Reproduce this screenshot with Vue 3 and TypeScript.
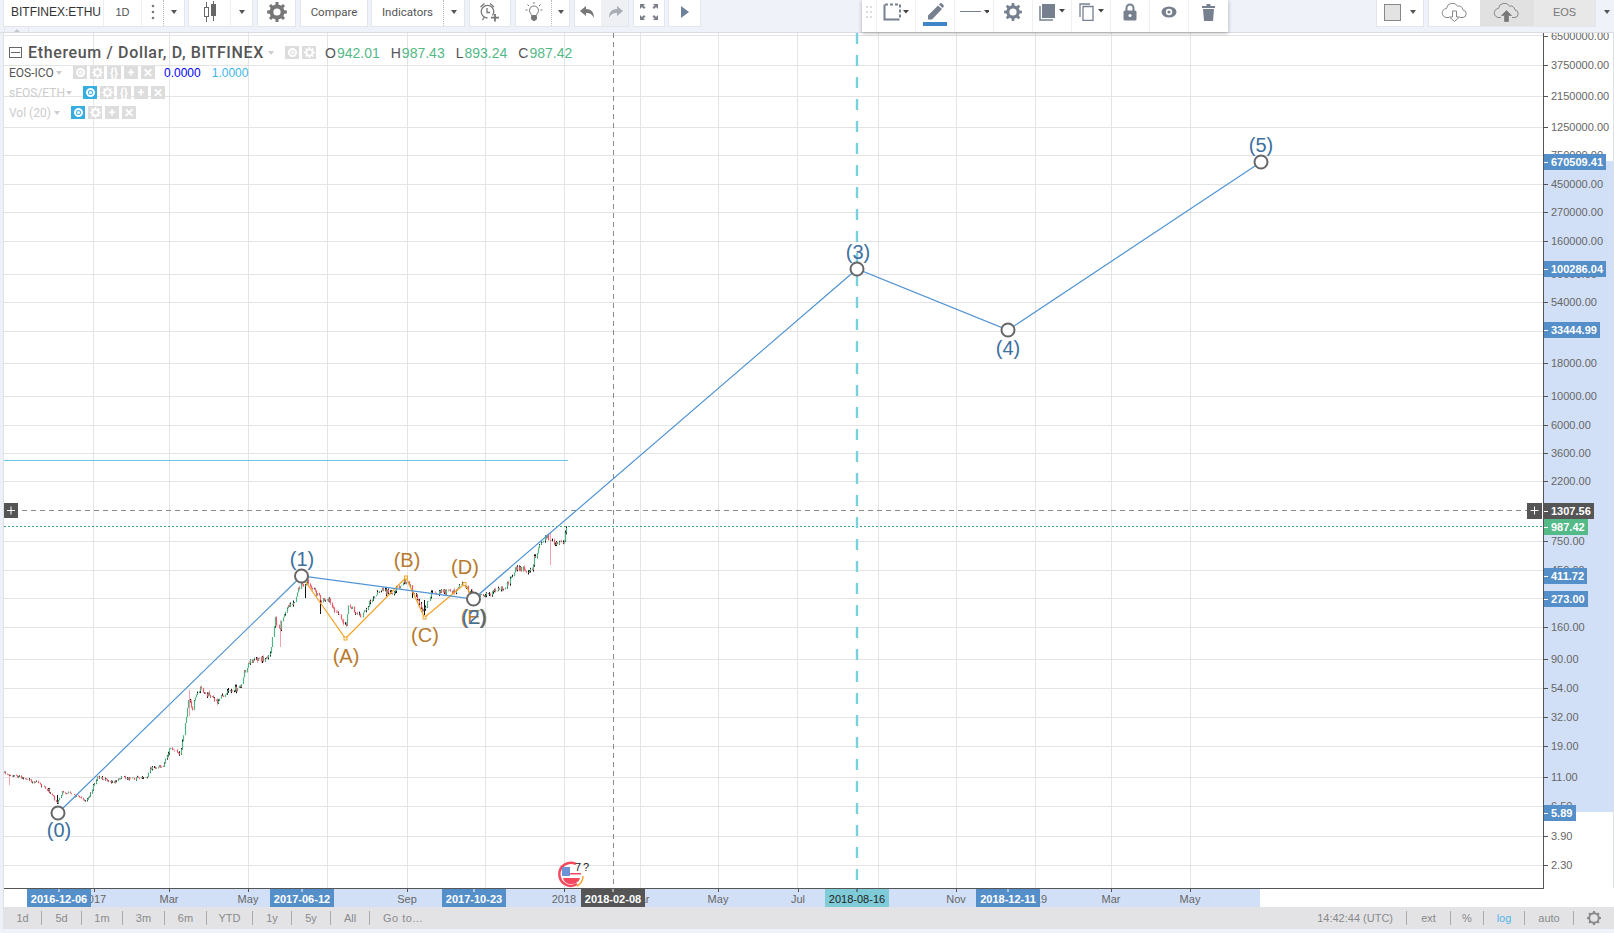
<template>
  <div class="app">
    <header class="topbar">
      <div class="tb-group">
        <div class="cell symbol">BITFINEX:ETHU</div>
        <div class="cell interval">1D</div>
        <div class="cell dots">
          <svg width="4" height="18" viewBox="0 0 4 18"><circle cx="2" cy="3" r="1.3" /><circle cx="2" cy="9" r="1.3" /><circle cx="2" cy="15" r="1.3" /></svg>
        </div>
        <div class="cell caret-cell dotted"><i class="caret"></i></div>
      </div>
      <div class="tb-group tight">
        <div class="cell candles">
          <svg width="20" height="22" viewBox="0 0 20 22" fill="none" stroke="#666">
            <path d="M6.500 1v20M13.500 0v20" />
            <rect x="4.500" y="6.500" width="4" height="9" fill="#fff" />
            <rect x="11.500" y="3.500" width="4" height="11" fill="#666" />
          </svg>
        </div>
        <div class="cell caret-cell"><i class="caret"></i></div>
      </div>
      <div class="tb-group">
        <div class="cell gear-cell">
          <svg width="20" height="20" viewBox="0 0 20 20"><path :d="gearBig" fill="#777" fill-rule="evenodd" /></svg>
        </div>
      </div>
      <div class="tb-group">
        <div class="cell compare">Compare</div>
      </div>
      <div class="tb-group tight">
        <div class="cell indicators">Indicators</div>
        <div class="cell caret-cell dotted"><i class="caret"></i></div>
      </div>
      <div class="tb-group">
        <div class="cell alarm">
          <svg width="22" height="20" viewBox="0 0 22 20" fill="none" stroke="#777" stroke-width="1.300">
            <path d="M13.500 13.500A6.300 6.300 0 1 0 8.500 16" />
            <path d="M8 6v4.500h3" />
            <path d="M1.500 5 5.500 1.500M11 1.500l4 3.500M3.500 18l1.500-2.500" />
            <path d="M16 12v7.500M12 15.700h8" stroke-width="1.800" />
          </svg>
        </div>
      </div>
      <div class="tb-group">
        <div class="cell bulb">
          <svg width="20" height="20" viewBox="0 0 20 20" fill="none" stroke="#777">
            <path d="M7.500 13.500c0-2-2-2.500-2-5a4.500 4.500 0 0 1 9 0c0 2.500-2 3-2 5z" />
            <path d="M7.500 14.500h5v2.500l-1.500 1.500H9L7.500 17z" fill="#777" />
            <path d="M10 0v2M1.500 8h2M16.500 8h2M3.500 2.500 5 4M16.500 2.500 15 4" />
          </svg>
        </div>
        <div class="cell caret-cell narrow dotted"><i class="caret"></i></div>
      </div>
      <div class="tb-group">
        <div class="cell undo">
          <svg width="18" height="14" viewBox="0 0 18 14"><path d="M7 1 1 6l6 5V8c4 0 6 1 8 5 0-6-3-9-8-9z" fill="#777" /></svg>
        </div>
        <div class="cell undo redo">
          <svg width="18" height="14" viewBox="0 0 18 14"><path d="M11 1l6 5-6 5V8c-4 0-6 1-8 5 0-6 3-9 8-9z" fill="#a9adb5" /></svg>
        </div>
      </div>
      <div class="tb-group">
        <div class="cell full">
          <svg width="20" height="18" viewBox="0 0 20 18" fill="#7a7f88">
            <path d="M1 1h5L4.500 2.500l2 2-1.500 1.500-2-2L1 6zM19 1h-5l1.500 1.500-2 2L15 6l2-2L19 6zM1 17h5l-1.500-1.500 2-2L5 12l-2 2-2-2zM19 17h-5l1.500-1.500-2-2L15 12l2 2 2-2z" />
          </svg>
        </div>
      </div>
      <div class="tb-group tight">
        <div class="cell play">
          <svg width="10" height="14" viewBox="0 0 10 14"><path d="M1 1l8 6-8 6z" fill="#6d8299" /></svg>
        </div>
      </div>

      <div class="tb-right">
        <div class="tb-group">
          <div class="cell swatch-cell"><span class="swatch"></span><i class="caret swatch-caret"></i></div>
        </div>
        <div class="tb-group">
          <div class="cell cloud">
            <svg width="28" height="20" viewBox="0 0 28 20" fill="none" stroke="#888">
              <path d="M8 15.500H6a4.500 4.500 0 0 1-.5-9A6 6 0 0 1 16.500 4 5 5 0 0 1 22 8a3.800 3.800 0 0 1 0 7.500h-3" />
              <path d="M11.500 9h4v6h3l-5 4.500L8.500 15h3z" fill="#fff" />
            </svg>
          </div>
          <div class="cell cloud active">
            <svg width="28" height="20" viewBox="0 0 28 20" fill="none" stroke="#888">
              <path d="M8 15.500H6a4.500 4.500 0 0 1-.5-9A6 6 0 0 1 16.500 4 5 5 0 0 1 22 8a3.800 3.800 0 0 1 0 7.500h-3" />
              <path d="M11.500 19.500h4v-6h3l-5-5-5 5h3z" fill="#777" />
            </svg>
          </div>
          <div class="cell eos">EOS</div>
        </div>
        <i class="caret last-caret"></i>
      </div>

      <div class="scroll-tab"><i></i></div>

      <div class="float-bar">
        <div class="fcell drag">
          <svg width="6" height="12" viewBox="0 0 6 12" fill="#dcdfe4">
            <rect v-for="d in dragDots" :key="d.k" :x="d.x" :y="d.y" width="2" height="2" />
          </svg>
        </div>
        <div class="fcell">
          <svg width="30" height="18" viewBox="0 0 30 18" fill="none" stroke="#76808f" stroke-width="2">
            <path d="M3.500 1.500v15h15" />
            <path d="M4 1.500h15v14" stroke-dasharray="3 2" />
            <path d="M22 7h6l-3 3.500z" fill="#444" stroke="none" />
          </svg>
        </div>
        <div class="fcell pen">
          <svg width="18" height="18" viewBox="0 0 18 18"><path d="M13 1.500l1.200-1.200a1 1 0 0 1 1.400 0l2 2a1 1 0 0 1 0 1.400L16.500 5zM12 2.500 16 6 6 16.500H2V12.500z" fill="#76808f" /></svg>
          <span class="pen-bar"></span>
        </div>
        <div class="fcell">
          <svg width="30" height="10" viewBox="0 0 30 10"><path d="M1 4.500h21" stroke="#76808f" /><path d="M25 3h6l-3 3.500z" fill="#444" /></svg>
        </div>
        <div class="fcell">
          <svg width="18" height="18" viewBox="0 0 20 20"><path :d="gearFloat" fill="#76808f" fill-rule="evenodd" /></svg>
        </div>
        <div class="fcell">
          <svg width="28" height="18" viewBox="0 0 28 18">
            <path d="M4 1h13v14H4z" fill="#76808f" />
            <path d="M2 3v14h13" fill="none" stroke="#76808f" stroke-width="1.500" />
            <path d="M21 6h6l-3 3.500z" fill="#444" />
          </svg>
        </div>
        <div class="fcell">
          <svg width="28" height="18" viewBox="0 0 28 18" fill="none" stroke="#76808f" stroke-width="1.300">
            <path d="M6 3.500h10v14H6z" />
            <path d="M3 14V1h10" />
            <path d="M21 6h6l-3 3.500z" fill="#444" stroke="none" />
          </svg>
        </div>
        <div class="fcell">
          <svg width="14" height="18" viewBox="0 0 14 18">
            <path d="M3.500 8V5a3.500 3.500 0 0 1 7 0v3" fill="none" stroke="#76808f" stroke-width="2" />
            <rect x="0.500" y="7.500" width="13" height="10" rx="1.500" fill="#76808f" />
            <circle cx="7" cy="12.500" r="1.500" fill="#fff" />
          </svg>
        </div>
        <div class="fcell">
          <svg width="16" height="12" viewBox="0 0 16 12">
            <ellipse cx="8" cy="6" rx="7.500" ry="5.500" fill="#76808f" />
            <circle cx="8" cy="6" r="3.200" fill="#fff" />
            <circle cx="8" cy="6" r="1.600" fill="#76808f" />
          </svg>
        </div>
        <div class="fcell">
          <svg width="13" height="17" viewBox="0 0 13 17" fill="#76808f">
            <path d="M0 2h4.500V0h4v2H13v2H0zM1 5h11l-1 12H2z" />
          </svg>
        </div>
      </div>
    </header>

    <div class="workspace">
      <div class="left-strip"></div>
      <div class="center">
        <div class="plot-row">
          <div class="pane">
            <svg class="canvas" width="1539" height="855" viewBox="4 33 1539 855">
              <g stroke="#e4e4e4" fill="none">
                <path v-for="y in gridY" :key="'h' + y" :d="`M4 ${y}.5H1543`" />
                <path v-for="x in gridX" :key="'v' + x" :d="`M${x}.5 33V888`" />
              </g>

              <path d="M4 460.500H568" stroke="#6fc5e4" fill="none" />
              <path d="M4 526.500H1543" stroke="#3aa97c" stroke-dasharray="2 2" fill="none" />
              <path d="M4 510.500H1543M613.500 33V888" stroke="#8a8a8a" stroke-dasharray="5 4" fill="none" />
              <path d="M857 33V888" stroke="#78d2de" stroke-width="2.400" stroke-dasharray="11 11" fill="none" />

              <path :d="candles.pink" stroke="#f3a3ad" fill="none" />
              <path :d="candles.black" stroke="#111" fill="none" />
              <path :d="candles.up" stroke="#4fb585" stroke-width="1.200" fill="none" />
              <path :d="candles.down" stroke="#ec5a69" stroke-width="1.200" fill="none" />

              <polyline :points="abcdLine" fill="none" stroke="#f7a326" stroke-width="1.200" />
              <rect v-for="p in abcdNodes" :key="p.label" :x="p.x - 1.500" :y="p.y - 1.500" width="3" height="3" fill="#fff" stroke="#f7a326" />
              <text v-for="p in abcdNodes" :key="'t' + p.label" :x="p.lx" :y="p.ly" class="wave-label orange">{{ p.label }}</text>
              <text x="474" y="624" class="wave-label orange">(E)</text>

              <polyline :points="waveLine" fill="none" stroke="#4f93d4" stroke-width="1.200" />
              <g v-for="p in waveNodes" :key="p.label">
                <circle :cx="p.x" :cy="p.y" r="6.500" fill="#fff" stroke="#666" stroke-width="2" />
                <text :x="p.lx" :y="p.ly" class="wave-label blue">{{ p.label }}</text>
              </g>

              <g>
                <path d="M576 864A11.500 11.500 0 1 0 577 884" fill="#fff" stroke="#f4485f" stroke-width="2.500" />
                <path d="M563 878h17c-1 4-5 6-9 6s-7-2-8-6z" fill="#f4485f" />
                <path d="M570 873h11v1.500h-11z" fill="#f4485f" />
                <rect x="562" y="867" width="8" height="9" fill="#6b93d6" />
                <path d="M583 876c0 5-2 8-6 10" fill="none" stroke="#f7a326" stroke-width="1.500" />
                <text x="578" y="871" class="event-num">7</text>
                <text x="586" y="871" class="event-num">?</text>
              </g>

              <rect x="4" y="503" width="14" height="15" fill="#555" />
              <path d="M7 510.500h8M11 506.500v8" stroke="#fff" />
              <rect x="1527" y="503" width="15" height="16" fill="#555" />
              <path d="M1530.500 510.500h8M1534.500 506.500v8" stroke="#fff" />
            </svg>

            <div class="legend">
              <div class="legend-main">
                <span class="collapse"></span>
                <span class="title">Ethereum / Dollar, D, BITFINEX</span>
                <i class="mini-caret"></i>
                <span class="chips main-chips">
                  <span class="chip"><span class="ring"></span></span>
                  <span class="chip"><svg width="11" height="11" viewBox="0 0 20 20"><path :d="gearFloat" fill="#fff" fill-rule="evenodd" /></svg></span>
                </span>
                <span v-for="v in ohlc" :key="v.k" class="ohlc"><b>{{ v.k }}</b>{{ v.v }}</span>
              </div>
              <div v-for="r in indicators" :key="r.name" class="ind" :class="{ faded: r.faded }">
                <span class="ind-name" :style="{ width: r.nameWidth + 'px' }">{{ r.name }}</span>
                <i class="mini-caret small"></i>
                <span class="chips">
                  <span v-for="c in r.chips" :key="c" class="chip" :class="{ on: c === 'eye' && r.faded }">
                    <span v-if="c === 'eye'" class="ring"></span>
                    <svg v-else-if="c === 'gear'" width="11" height="11" viewBox="0 0 20 20"><path :d="gearFloat" fill="#fff" fill-rule="evenodd" /></svg>
                    <template v-else>{{ c }}</template>
                  </span>
                </span>
                <span v-if="r.values" class="ind-values"><em class="v0">0.0000</em><em class="v1">1.0000</em></span>
              </div>
            </div>
          </div>

          <div class="price-axis">
            <svg width="69" height="855" viewBox="1544 33 69 855">
              <rect x="1544" y="161" width="69" height="651" fill="#d2e0f7" />
              <g v-for="t in priceTicks" :key="t.v">
                <path :d="`M1544 ${t.y}.5h4`" stroke="#555" />
                <text x="1551" :y="t.y + 4" class="tick">{{ t.v }}</text>
              </g>
              <g v-for="l in priceLabels" :key="l.v">
                <rect x="1544" :y="l.y" :width="l.w" height="16" :fill="l.color" />
                <path :d="`M1544 ${l.y + 8}.5h4`" stroke="#fff" />
                <text x="1551" :y="l.y + 12" class="tick strong">{{ l.v }}</text>
              </g>
            </svg>
          </div>
        </div>

        <div class="time-axis">
          <svg width="1610" height="19" viewBox="4 889 1610 19">
            <rect x="27" y="890" width="1233" height="18" fill="#d2e0f7" />
            <path d="M4 889.500H1544" stroke="#555" />
            <g v-for="t in timeTicks" :key="t.x">
              <path :d="`M${t.x}.5 890v3`" stroke="#555" />
              <text :x="t.x" y="904" text-anchor="middle" class="tick">{{ t.v }}</text>
            </g>
            <g v-for="b in timeBoxes" :key="b.v">
              <rect :x="b.x" y="890" :width="b.w" height="18" :fill="b.color" />
              <path :d="`M${b.x + b.w / 2} 890v3`" :stroke="b.dark ? '#333' : '#fff'" />
              <text :x="b.x + b.w / 2" y="904" text-anchor="middle" class="tick" :class="b.dark ? 'dark' : 'strong'">{{ b.v }}</text>
            </g>
          </svg>
        </div>

        <footer class="bottom-bar">
          <div class="ranges">
            <span v-for="r in ranges" :key="r.t" class="range" :style="{ width: r.w + 'px' }">{{ r.t }}</span>
            <span class="goto">Go to...</span>
          </div>
          <div class="bottom-right">
            <span class="clock">14:42:44 (UTC)</span>
            <span class="opt ext">ext</span>
            <span class="opt pct">%</span>
            <span class="opt log">log</span>
            <span class="opt auto">auto</span>
            <span class="opt cog">
              <svg width="14" height="14" viewBox="0 0 20 20"><path :d="gearThin" fill="#888" fill-rule="evenodd" /></svg>
            </span>
          </div>
        </footer>
      </div>
    </div>
  </div>
</template>

<script setup lang="ts">
interface Node { label: string; x: number; y: number; lx: number; ly: number }

// builds a cog outline around (10,10), hole cut with evenodd
function gear(outer: number, inner: number, hole: number, teeth = 8): string {
  let d = '';
  const step = (Math.PI * 2) / teeth;
  for (let i = 0; i < teeth; i++) {
    const a = i * step;
    const pts: [number, number][] = [
      [inner, a - step * 0.5],
      [inner, a - step * 0.28],
      [outer, a - step * 0.18],
      [outer, a + step * 0.18],
      [inner, a + step * 0.28],
    ];
    for (const [r, t] of pts) {
      d += `${d ? 'L' : 'M'}${(10 + r * Math.cos(t)).toFixed(2)} ${(10 + r * Math.sin(t)).toFixed(2)}`;
    }
  }
  d += `ZM${10 - hole} 10a${hole} ${hole} 0 1 0 ${hole * 2} 0a${hole} ${hole} 0 1 0 ${-hole * 2} 0Z`;
  return d;
}

const gearBig = gear(10, 7.5, 3.6);
const gearFloat = gear(10, 7.5, 4);
const gearThin = gear(10, 8, 5.5);

const dragDots = [0, 1].flatMap((c) => [0, 1, 2].map((r) => ({ k: `${c}${r}`, x: c * 4, y: r * 5 })));

const gridY = [35, 65, 96, 127, 155, 184, 212, 241, 274, 302, 331, 363, 396, 425, 453, 481, 541, 570, 598, 627, 659, 688, 717, 746, 777, 806, 836, 865];
const gridX = [93, 169, 248, 327, 407, 485, 564, 640, 718, 797, 878, 956, 1035, 1111, 1190];

const priceTicks = [
  { y: 36, v: '6500000.00' }, { y: 65, v: '3750000.00' }, { y: 96, v: '2150000.00' }, { y: 127, v: '1250000.00' },
  { y: 155, v: '750000.00' }, { y: 184, v: '450000.00' }, { y: 212, v: '270000.00' }, { y: 241, v: '160000.00' },
  { y: 274, v: '90000.00' }, { y: 302, v: '54000.00' }, { y: 363, v: '18000.00' }, { y: 396, v: '10000.00' },
  { y: 425, v: '6000.00' }, { y: 453, v: '3600.00' }, { y: 481, v: '2200.00' }, { y: 541, v: '750.00' },
  { y: 570, v: '450.00' }, { y: 627, v: '160.00' }, { y: 659, v: '90.00' }, { y: 688, v: '54.00' },
  { y: 717, v: '32.00' }, { y: 746, v: '19.00' }, { y: 777, v: '11.00' }, { y: 806, v: '6.50' },
  { y: 836, v: '3.90' }, { y: 865, v: '2.30' },
];

const priceLabels = [
  { y: 154, v: '670509.41', w: 62, color: '#558fc9' },
  { y: 261, v: '100286.04', w: 62, color: '#558fc9' },
  { y: 322, v: '33444.99', w: 56, color: '#558fc9' },
  { y: 503, v: '1307.56', w: 50, color: '#555555' },
  { y: 519, v: '987.42', w: 44, color: '#53ba88' },
  { y: 568, v: '411.72', w: 43, color: '#558fc9' },
  { y: 591, v: '273.00', w: 44, color: '#558fc9' },
  { y: 805, v: '5.89', w: 32, color: '#558fc9' },
];

const timeTicks = [
  { x: 94, v: '2017' }, { x: 169, v: 'Mar' }, { x: 248, v: 'May' }, { x: 407, v: 'Sep' }, { x: 564, v: '2018' },
  { x: 640, v: 'Mar' }, { x: 718, v: 'May' }, { x: 798, v: 'Jul' }, { x: 956, v: 'Nov' }, { x: 1035, v: '2019' },
  { x: 1111, v: 'Mar' }, { x: 1190, v: 'May' },
];

const timeBoxes = [
  { x: 27, w: 64, v: '2016-12-06', color: '#558fc9', dark: false },
  { x: 270, w: 64, v: '2017-06-12', color: '#558fc9', dark: false },
  { x: 442, w: 64, v: '2017-10-23', color: '#558fc9', dark: false },
  { x: 581, w: 64, v: '2018-02-08', color: '#555555', dark: false },
  { x: 825, w: 64, v: '2018-08-16', color: '#7fccd8', dark: true },
  { x: 976, w: 64, v: '2018-12-11', color: '#558fc9', dark: false },
];

const ranges = [
  { t: '1d', w: 38 }, { t: '5d', w: 40 }, { t: '1m', w: 41 }, { t: '3m', w: 42 }, { t: '6m', w: 42 },
  { t: 'YTD', w: 46 }, { t: '1y', w: 39 }, { t: '5y', w: 39 }, { t: 'All', w: 39 },
];

const ohlc = [
  { k: 'O', v: '942.01' }, { k: 'H', v: '987.43' }, { k: 'L', v: '893.24' }, { k: 'C', v: '987.42' },
];

const indicators = [
  { name: 'EOS-ICO', nameWidth: 43, faded: false, values: true, chips: ['eye', 'gear', '{}', '+', '✕'] },
  { name: 'sEOS/ETH', nameWidth: 53, faded: true, values: false, chips: ['eye', 'gear', '{}', '+', '✕'] },
  { name: 'Vol (20)', nameWidth: 41, faded: true, values: false, chips: ['eye', 'gear', '+', '✕'] },
];

const waveNodes: Node[] = [
  { label: '(0)', x: 58, y: 813, lx: 59, ly: 837 },
  { label: '(1)', x: 301.5, y: 576, lx: 302, ly: 566 },
  { label: '(2)', x: 473.5, y: 599, lx: 474, ly: 624 },
  { label: '(3)', x: 857, y: 269, lx: 858, ly: 259 },
  { label: '(4)', x: 1008, y: 330, lx: 1008, ly: 355 },
  { label: '(5)', x: 1261, y: 162, lx: 1261, ly: 152 },
];
const abcdNodes: Node[] = [
  { label: '(A)', x: 345.500, y: 638.500, lx: 346, ly: 663 },
  { label: '(B)', x: 406, y: 577.500, lx: 407, ly: 567 },
  { label: '(C)', x: 424.500, y: 617.500, lx: 425, ly: 642 },
  { label: '(D)', x: 464.500, y: 584, lx: 465, ly: 574 },
];
const waveLine = waveNodes.map((p) => `${p.x},${p.y}`).join(' ');
const abcdLine = [[301.5, 576], ...abcdNodes.map((p) => [p.x, p.y]), [473.5, 599]].map((p) => p.join(',')).join(' ');

// price path traced off the chart, candles get scattered round it
const path: [number, number][] = [
  [4, 773], [20, 777], [40, 784], [50, 792], [57, 803], [62, 792], [70, 793], [85, 801], [90, 793], [97, 777],
  [113, 783], [120, 777], [133, 779], [148, 776], [150, 767], [163, 767], [170, 745], [180, 753], [185, 722],
  [189, 698], [192, 708], [199, 688], [217, 701], [227, 692], [240, 688], [243, 675], [248, 663], [257, 660],
  [268, 660], [272, 640], [275, 620], [280, 630], [285, 610], [293, 603], [300, 585], [308, 582], [320, 600],
  [327, 598], [340, 618], [346, 628], [348, 605], [360, 617], [377, 590], [392, 593], [407, 580], [412, 590],
  [423, 612], [430, 595], [440, 592], [452, 592], [463, 585], [470, 592], [487, 595], [507, 585], [515, 567],
  [530, 572], [538, 547], [547, 535], [552, 543], [563, 542], [567, 528],
];

function priceAt(x: number): number {
  for (let i = 1; i < path.length; i++) {
    if (x <= path[i][0]) {
      const [x0, y0] = path[i - 1];
      const [x1, y1] = path[i];
      return y0 + ((y1 - y0) * (x - x0)) / (x1 - x0);
    }
  }
  return path[path.length - 1][1];
}

function buildCandles() {
  let seed = 7;
  const rnd = () => {
    seed = (seed * 16807) % 2147483647;
    return seed / 2147483647;
  };
  // the long wicks that stand out in the picture
  const out = {
    up: '',
    down: '',
    black: 'M305.500 585V598M320.500 598V614M412.500 585V598M424.500 600V615M57.500 795V804',
    pink: 'M189.500 690V716M280.500 620V647M550.500 533V565M9.500 775V785',
  };
  let prev = priceAt(4);
  for (let x = 4; x <= 567; x += 1.29) {
    const amp = x < 150 ? 1.2 : 2.5;
    const close = priceAt(x) + (rnd() - 0.5) * amp * 2.5;
    const px = Math.round(x) + 0.5;
    const rising = close < prev;
    const top = Math.min(prev, close) - rnd() * amp * 0.8;
    const bottom = Math.max(prev, close) + rnd() * amp * 0.8;
    const wick = `M${px} ${top.toFixed(1)}V${bottom.toFixed(1)}`;
    const body = `M${px} ${prev.toFixed(1)}V${close.toFixed(1)}`;
    if (rising) {
      out.up += body;
      if (rnd() > 0.45) out.black += wick;
    } else {
      out.down += body;
      if (rnd() > 0.5) out.pink += wick;
      else if (rnd() > 0.6) out.black += wick;
    }
    prev = close;
  }
  return out;
}

const candles = buildCandles();
</script>

<style scoped>
.app {
  width: 1614px;
  height: 933px;
  display: flex;
  flex-direction: column;
  background: #eff2f9;
  font-family: "Liberation Sans", Arial, sans-serif;
  overflow: hidden;
}
.topbar {
  height: 32px;
  flex-shrink: 0;
  border-bottom: 1px solid #d9dce3;
  padding-left: 4px;
  display: flex;
  align-items: flex-start;
  gap: 6px;
  position: relative;
  box-sizing: content-box;
}
.tb-group {
  display: flex;
  height: 26px;
  background: #fff;
  box-shadow: 0 0 0 1px #e4e6ed;
}
.tb-group.tight { margin-left: -1px; }
.cell {
  display: flex;
  align-items: center;
  justify-content: center;
  color: #555;
  font-size: 11px;
  padding-bottom: 2px;
  box-sizing: border-box;
}
.symbol {
  width: 99px;
  justify-content: flex-start;
  padding-left: 7px;
  font-size: 12px;
  color: #333;
  overflow: hidden;
  white-space: nowrap;
}
.interval { width: 38px; border-left: 1px solid #eceef3; }
.dots { width: 22px; border-left: 1px solid #eceef3; fill: #777; }
.caret-cell { width: 21px; }
.caret-cell.dotted { border-left: 1px dotted #bbb; }
.caret-cell.narrow { width: 18px; }
.caret {
  display: block;
  width: 0;
  height: 0;
  border-left: 3.5px solid transparent;
  border-right: 3.5px solid transparent;
  border-top: 4px solid #555;
}
.candles { width: 42px; border-right: 1px solid #eceef3; }
.gear-cell { width: 37px; }
.compare, .indicators {
  font-family: Roboto, "Liberation Sans", sans-serif;
  font-size: 11.5px;
}
.compare { width: 66px; }
.indicators { width: 71px; }
.alarm { width: 40px; }
.bulb { width: 35px; }
.undo { width: 26px; }
.redo { width: 27px; background: #eef0f4; }
.full { width: 30px; }
.play { width: 31px; }
.tb-right {
  position: absolute;
  left: 1377px;
  top: 0;
  display: flex;
  gap: 6px;
  align-items: flex-start;
}
.swatch-cell { width: 46px; justify-content: flex-start; padding-left: 7px; }
.swatch {
  width: 17px;
  height: 17px;
  background: #e3e3e3;
  border: 1px solid #888;
  box-sizing: border-box;
}
.swatch-caret { margin-left: 9px; }
.cloud { width: 51px; }
.cloud.active { width: 54px; background: #e1e1e1; }
.eos { width: 61px; background: #e8e8e8; color: #777; }
.last-caret { margin: 10px 0 0 3px; }
.scroll-tab {
  position: absolute;
  left: 4px;
  top: 26px;
  width: 25px;
  height: 6px;
  border: 1px solid #e2e4ea;
  border-bottom: none;
  box-sizing: border-box;
  display: flex;
  justify-content: center;
  padding-top: 1px;
}
.scroll-tab i {
  border-left: 3px solid transparent;
  border-right: 3px solid transparent;
  border-bottom: 3px solid #c5c8cf;
}
.float-bar {
  position: absolute;
  left: 862px;
  top: 0;
  height: 32px;
  display: flex;
  background: #fff;
  box-shadow: 0 1px 4px rgba(0, 0, 0, 0.3);
  z-index: 3;
}
.fcell {
  width: 39px;
  height: 32px;
  box-sizing: border-box;
  border-right: 1px solid #eff0f3;
  display: flex;
  align-items: center;
  justify-content: center;
  padding-bottom: 8px;
  position: relative;
}
.fcell:last-child { border-right: none; }
.fcell.drag { width: 15px; }
.pen-bar {
  position: absolute;
  left: 7px;
  top: 22px;
  width: 24px;
  height: 4px;
  background: #3d85c6;
}
.workspace {
  height: 896px;
  flex-shrink: 0;
  display: flex;
}
.left-strip {
  width: 4px;
  background: #eef1f8;
  border-right: 1px solid #dde0e8;
  box-sizing: border-box;
}
.center {
  width: 1610px;
  display: flex;
  flex-direction: column;
}
.plot-row {
  height: 855px;
  display: flex;
}
.pane {
  width: 1539px;
  position: relative;
  background: #fff;
}
.canvas { display: block; }
.wave-label {
  font-size: 20px;
  text-anchor: middle;
}
.wave-label.blue { fill: #3d6f9f; }
.wave-label.orange { fill: #b87a2c; }
.event-num {
  font-size: 11px;
  fill: #222;
  text-anchor: middle;
}
.legend {
  position: absolute;
  left: 5px;
  top: 13px;
  color: #555;
}
.legend-main {
  display: flex;
  align-items: center;
  height: 13px;
  margin-bottom: 7px;
}
.collapse {
  width: 13px;
  height: 11px;
  border: 1px solid #666;
  box-sizing: border-box;
  position: relative;
  margin-right: 6px;
}
.collapse::after {
  content: '';
  position: absolute;
  left: 1px;
  right: 1px;
  top: 4px;
  height: 1px;
  background: #666;
}
.title {
  font-family: Roboto, "Liberation Sans", sans-serif;
  font-size: 16px;
  font-weight: 500;
  letter-spacing: 0.65px;
  white-space: nowrap;
  color: #555;
}
.mini-caret {
  width: 0;
  height: 0;
  margin-left: 4px;
  border-left: 3.500px solid transparent;
  border-right: 3.500px solid transparent;
  border-top: 4px solid #ccc;
}
.chips {
  display: flex;
  gap: 3px;
  margin-left: 11px;
}
.main-chips { margin-right: 9px; }
.chip {
  width: 14px;
  height: 13px;
  background: #dddddd;
  color: #fff;
  font-size: 12px;
  font-weight: bold;
  display: flex;
  align-items: center;
  justify-content: center;
  line-height: 1;
}
.chip.on { background: #37aee2; }
.ring {
  width: 9px;
  height: 9px;
  border: 2px solid #fff;
  border-radius: 50%;
  box-sizing: border-box;
  position: relative;
}
.ring::after {
  content: '';
  position: absolute;
  left: 1px;
  top: 1px;
  width: 3px;
  height: 3px;
  border-radius: 50%;
  background: #fff;
}
.ohlc {
  font-size: 14px;
  color: #53b987;
  margin-right: 11px;
}
.ohlc b {
  font-weight: normal;
  color: #555;
  margin-right: 1px;
}
.ind {
  display: flex;
  align-items: center;
  height: 13px;
  margin-bottom: 7px;
  font-family: Roboto, "Liberation Sans", sans-serif;
  font-size: 12px;
}
.ind.faded { color: #ccc; }
.ind-name { white-space: nowrap; }
.ind-values { margin-left: 9px; font-family: "Liberation Sans", Arial, sans-serif; }
.ind-values em { font-style: normal; }
.v0 { color: #0000ff; }
.v1 { color: #3fb4ea; margin-left: 11px; }
.price-axis {
  width: 71px;
  background: #fff;
  border-left: 1px solid #555;
  border-right: 1px solid #dde0e8;
  box-sizing: border-box;
}
.price-axis svg { display: block; }
.tick {
  font-size: 11px;
  fill: #666;
}
.tick.strong { fill: #fff; font-weight: bold; }
.tick.dark { fill: #222; }
.time-axis {
  height: 19px;
  background: #fff;
}
.time-axis svg { display: block; }
.bottom-bar {
  height: 22px;
  background: #e3e3e6;
  display: flex;
  justify-content: space-between;
  align-items: center;
  font-size: 11px;
  color: #8a8a8a;
}
.ranges { display: flex; align-items: center; }
.range {
  height: 14px;
  line-height: 14px;
  text-align: center;
  border-right: 1px solid #aaa;
  box-sizing: border-box;
}
.goto { margin-left: 13px; letter-spacing: 0.5px; }
.bottom-right { display: flex; align-items: center; }
.clock { margin-right: 13px; }
.opt {
  height: 14px;
  line-height: 14px;
  text-align: center;
  border-left: 1px solid #aaa;
  box-sizing: border-box;
}
.ext { width: 44px; }
.pct { width: 33px; }
.log { width: 41px; color: #53b6e8; }
.auto { width: 49px; }
.cog { width: 41px; display: flex; justify-content: center; }
</style>

<style>
html, body {
  margin: 0;
  background: #fff;
}
</style>
